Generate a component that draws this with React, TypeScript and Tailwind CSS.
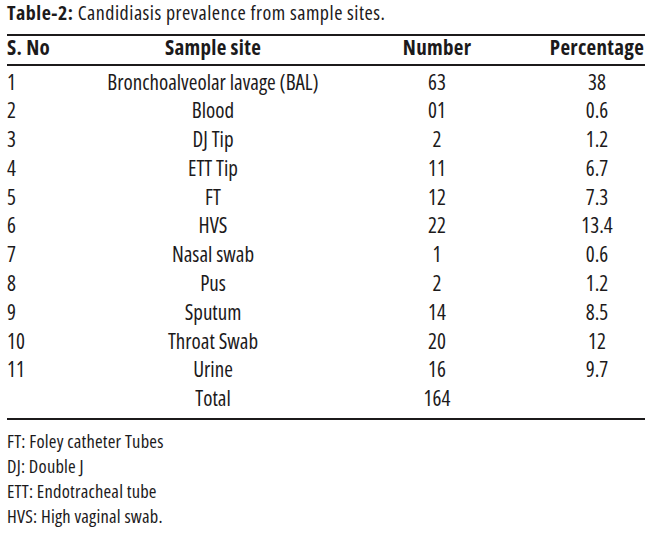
const rows = [
  ["1", "Bronchoalveolar lavage (BAL)", "63", "38"],
  ["2", "Blood", "01", "0.6"],
  ["3", "DJ Tip", "2", "1.2"],
  ["4", "ETT Tip", "11", "6.7"],
  ["5", "FT", "12", "7.3"],
  ["6", "HVS", "22", "13.4"],
  ["7", "Nasal swab", "1", "0.6"],
  ["8", "Pus", "2", "1.2"],
  ["9", "Sputum", "14", "8.5"],
  ["10", "Throat Swab", "20", "12"],
  ["11", "Urine", "16", "9.7"],
];

const notes = [
  "FT: Foley catheter Tubes",
  "DJ: Double J",
  "ETT: Endotracheal tube",
  "HVS: High vaginal swab.",
];

const cols = "grid grid-cols-[94px_224px_224px_96px]";

export default function App() {
  return (
    <div
      className="h-[536px] w-[650px] bg-white pl-[7px] pt-[0.5px] text-[#1c1a1b]"
      style={{ fontFamily: '"Open Sans", sans-serif', fontStretch: "condensed" }}
    >
      <p className="h-[33.5px] text-[20px] leading-[24px] tracking-[0.5px]">
        <span className="font-bold">Table-2:</span> Candidiasis prevalence from sample sites.
      </p>

      <div className="w-[638px]">
        <div className={`${cols} h-[32px] border-y-2 border-[#1c1a1b] text-[21px] font-bold leading-[22px] tracking-[0.3px]`}>
          <div>S. No</div>
          <div className="text-center">Sample site</div>
          <div className="text-center">Number</div>
          <div className="text-center">Percentage</div>
        </div>

        <div className="pb-[5px] pt-[1.5px] text-[21px] leading-[28.8px]">
          {rows.map((r) => (
            <div key={r[0]} className={`${cols} h-[28.8px]`}>
              <div>{r[0]}</div>
              <div className="text-center">{r[1]}</div>
              <div className="text-center">{r[2]}</div>
              <div className="text-center">{r[3]}</div>
            </div>
          ))}
          <div className={`${cols} h-[28.8px]`}>
            <div />
            <div className="text-center">Total</div>
            <div className="text-center">164</div>
            <div />
          </div>
        </div>

        <div className="border-t-2 border-[#1c1a1b] pt-[8px] text-[18.5px] leading-[25px] tracking-[0.2px]">
          {notes.map((n) => (
            <p key={n}>{n}</p>
          ))}
        </div>
      </div>
    </div>
  );
}
